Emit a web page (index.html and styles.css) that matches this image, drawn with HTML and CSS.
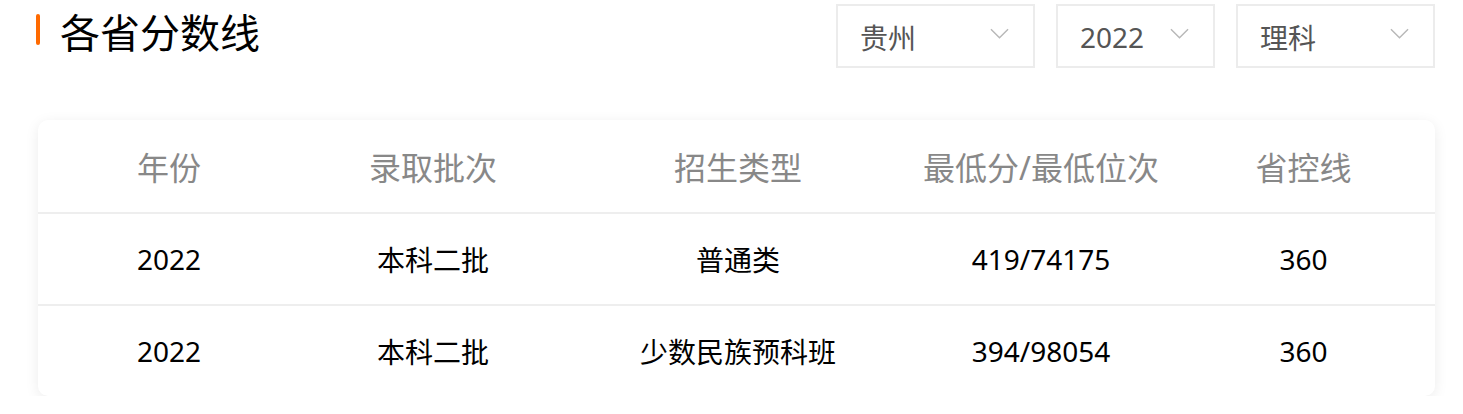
FILE: index.html
```html
<!DOCTYPE html>
<html lang="zh-CN">
<head>
    <meta charset="UTF-8">
    <meta name="viewport" content="width=device-width, initial-scale=1.0">
    <title>各省分数线</title>
    <link rel="stylesheet" href="styles.css">
</head>
<body>
    <div class="container">
        <header class="top">
            <h1 class="title">各省分数线</h1>
            <div class="filters">
                <div class="select wide">
                    <span>贵州</span>
                    <svg class="arrow" viewBox="0 0 20 12"><path d="M1 1 L10 10 L19 1"/></svg>
                </div>
                <div class="select">
                    <span>2022</span>
                    <svg class="arrow" viewBox="0 0 20 12"><path d="M1 1 L10 10 L19 1"/></svg>
                </div>
                <div class="select wide">
                    <span>理科</span>
                    <svg class="arrow" viewBox="0 0 20 12"><path d="M1 1 L10 10 L19 1"/></svg>
                </div>
            </div>
        </header>
        <main class="card">
            <div class="row head">
                <div>年份</div>
                <div>录取批次</div>
                <div>招生类型</div>
                <div>最低分/最低位次</div>
                <div>省控线</div>
            </div>
            <div class="row">
                <div>2022</div>
                <div>本科二批</div>
                <div>普通类</div>
                <div>419/74175</div>
                <div>360</div>
            </div>
            <div class="row">
                <div>2022</div>
                <div>本科二批</div>
                <div>少数民族预科班</div>
                <div>394/98054</div>
                <div>360</div>
            </div>
        </main>
    </div>
</body>
</html>
```

FILE: styles.css
```css
body {
    font-family: "Noto Sans", "Noto Sans CJK SC", sans-serif;
    margin: 0;
    padding: 0;
    background: #fff;
    color: #000;
}
.container {
    padding: 4px 28px 0 38px;
}
.top {
    display: flex;
    justify-content: space-between;
    align-items: flex-start;
}
.title {
    position: relative;
    margin: 0;
    padding: 5px 0 0 22px;
    font-size: 40px;
    font-weight: normal;
    line-height: 48px;
}
.title::before {
    content: "";
    position: absolute;
    left: -2px;
    top: 10px;
    width: 4px;
    height: 31px;
    border-radius: 2px;
    background: #ff6a00;
}
.filters {
    display: flex;
    gap: 21px;
}
.select {
    box-sizing: border-box;
    display: flex;
    align-items: center;
    justify-content: space-between;
    width: 159px;
    height: 64px;
    padding: 2px 24px 0 22px;
    border: 2px solid #ececec;
    font-size: 28px;
    color: #555;
}
.select.wide {
    width: 199px;
}
.arrow {
    width: 19px;
    height: 12px;
    margin-top: -6px;
}
.arrow path {
    fill: none;
    stroke: #b8b8b8;
    stroke-width: 1.5;
}
.card {
    margin-top: 52px;
    border-radius: 10px;
    background: #fff;
    box-shadow: 0 3px 14px rgba(0, 0, 0, 0.08);
    overflow: hidden;
}
.row {
    box-sizing: border-box;
    display: grid;
    grid-template-columns: 262px 266px 344px 262px 1fr;
    align-items: center;
    height: 92px;
    border-top: 2px solid #eeeeee;
    font-size: 28px;
    text-align: center;
}
.row.head {
    border-top: none;
    font-size: 32px;
    color: #888;
}
```
